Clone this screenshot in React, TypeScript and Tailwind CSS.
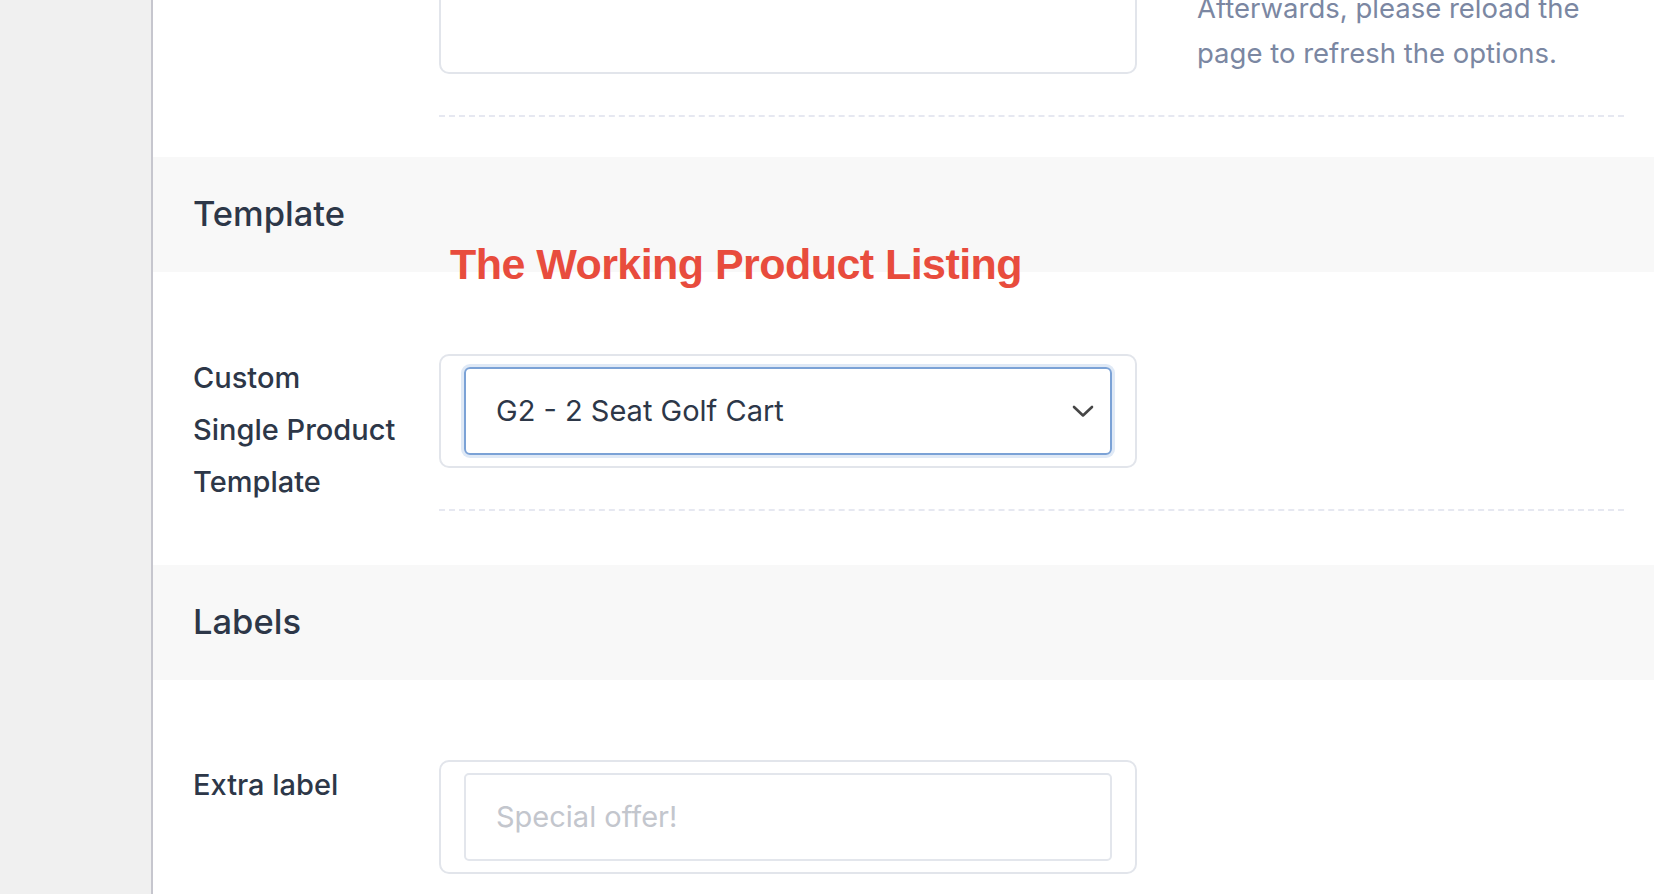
import React from "react";

function Chevron() {
  return (
    <svg width="22" height="13" viewBox="0 0 22 13" fill="none">
      <path d="M2 2 L11 10.5 L20 2" stroke="#464646" strokeWidth="2.6" strokeLinecap="round" strokeLinejoin="round" />
    </svg>
  );
}

function SectionBand({ title }: { title: string }) {
  return (
    <div className="h-[115px] shrink-0 bg-[#f8f8f8] flex items-center pl-10">
      <h2 className="text-[34.5px] font-medium text-[#2d3748] leading-none">{title}</h2>
    </div>
  );
}

export default function App() {
  return (
    <div className="flex h-screen w-full overflow-hidden bg-white font-['Inter',sans-serif]">
      {/* Sidebar */}
      <aside className="w-[153px] shrink-0 bg-[#f0f0f0] border-r-2 border-[#c6c6ce]" />

      <main className="relative flex-1 flex flex-col">
        {/* Previous field (cut off) */}
        <div className="flex pl-10 mt-[-40px]">
          <div className="w-[246px] shrink-0" />
          <div className="flex-1 mr-[30px] flex gap-[60px] pb-[39px] border-b-2 border-dashed border-[#e6e8f1]">
            <div className="w-[698px] h-[114px] shrink-0 rounded-[10px] border-2 border-[#e2e5eb]" />
            <p className="pt-[26px] text-[27.5px] leading-[45px] text-[#7b87a2] whitespace-nowrap">
              Afterwards, please reload the
              <br />
              page to refresh the options.
            </p>
          </div>
        </div>

        {/* Template */}
        <div className="mt-[40px]">
          <SectionBand title="Template" />
        </div>

        <div className="absolute left-[297px] top-[239px] font-['Liberation_Sans',Arial,sans-serif] font-bold text-[43px] leading-[50px] tracking-[-0.55px] text-[#e84c3d] whitespace-nowrap">
          The Working Product Listing
        </div>

        <div className="flex pl-10 pt-[82px]">
          <div className="w-[246px] shrink-0 mt-[-2px] text-[29px] leading-[52px] font-medium text-[#2d3748]">
            Custom
            <br />
            Single Product
            <br />
            Template
          </div>
          <div className="flex-1 mr-[30px] pb-[41px] border-b-2 border-dashed border-[#e6e8f1]">
            <div className="w-[698px] rounded-[10px] border-2 border-[#e2e5eb] px-[23px] py-[11px]">
              <div className="h-[88px] rounded-[6px] border-2 border-[#7ba2d6] shadow-[0_0_0_3px_#dfe9f6] flex items-center justify-between pl-[30px] pr-[16px]">
                <span className="text-[29px] text-[#2d3748]">G2 - 2 Seat Golf Cart</span>
                <Chevron />
              </div>
            </div>
          </div>
        </div>

        {/* Labels */}
        <div className="mt-[54px]">
          <SectionBand title="Labels" />
        </div>

        <div className="flex pl-10 pt-[80px]">
          <div className="w-[246px] shrink-0 mt-[-1px] text-[29px] leading-[52px] font-medium text-[#2d3748]">
            Extra label
          </div>
          <div className="flex-1 mr-[30px]">
            <div className="w-[698px] rounded-[10px] border-2 border-[#e2e5eb] px-[23px] py-[11px]">
              <div className="h-[88px] rounded-[5px] border-2 border-[#e3e6ec] flex items-center pl-[30px]">
                <span className="text-[29px] text-[#c3c6cd]">Special offer!</span>
              </div>
            </div>
          </div>
        </div>
      </main>
    </div>
  );
}
